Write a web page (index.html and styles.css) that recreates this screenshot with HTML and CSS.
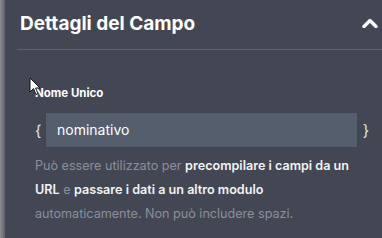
FILE: index.html
```html
<!DOCTYPE html>
<html lang="it">
<head>
  <meta charset="UTF-8" />
  <title>Dettagli del Campo</title>
  <link rel="stylesheet" href="styles.css">
</head>
<body>

  <div class="edge"></div>

  <div class="panel">
    <div class="panel-head">
      <div class="panel-title">Dettagli del Campo</div>
      <svg class="chevron" width="16" height="10" viewBox="0 0 16 10">
        <polyline points="2,8.5 8,2.5 14,8.5" fill="none" stroke="#ffffff" stroke-width="3.4" stroke-linecap="round" stroke-linejoin="round"/>
      </svg>
    </div>

    <div class="field">
      <div class="field-label">Nome Unico</div>
      <div class="field-row">
        <span class="brace">{</span>
        <div class="field-input">nominativo</div>
        <span class="brace">}</span>
      </div>
      <p class="field-help">
        Può essere utilizzato per <span class="hl">precompilare i campi da un</span><br>
        <span class="hl">URL</span> e <span class="hl">passare i dati a un altro modulo</span><br>
        automaticamente. Non può includere spazi.
      </p>
    </div>
  </div>

  <svg class="cursor" width="12" height="19" viewBox="0 0 12 19">
    <path d="M1 1 L1 15 L4.5 11.5 L7 17.5 L9 16.6 L6.6 11 L11 11 Z" fill="#ffffff" stroke="#111111" stroke-width="1" stroke-linejoin="round"/>
  </svg>

</body>
</html>
```

FILE: styles.css
```css
body {
  margin: 0;
  padding: 0;
  width: 382px;
  height: 238px;
  overflow: hidden;
  display: flex;
  background-color: #424753;
  font-family: Inter, "Noto Sans", sans-serif;
  position: relative;
}

.edge {
  width: 5px;
  flex-shrink: 0;
  background: linear-gradient(to right, #8c8d90, #5d6068);
}

.panel {
  flex: 1;
}

.panel-head {
  margin-left: 12px;
  height: 49px;
  border-bottom: 1px solid #5a6570;
  display: flex;
  align-items: center;
  justify-content: space-between;
  padding: 0 4px 0 3px;
}

.panel-title {
  font-size: 19px;
  font-weight: 700;
  color: #ffffff;
  margin-top: -3px;
}

.chevron {
  margin-top: -4px;
}

.field {
  padding: 35px 0 0 30px;
}

.field-label {
  font-size: 11.5px;
  font-weight: 700;
  color: #ffffff;
  line-height: 16px;
}

.field-row {
  display: flex;
  align-items: center;
  margin-top: 11px;
}

.brace {
  color: #e8e9ec;
  font-size: 15px;
  width: 10px;
  text-align: center;
}

.brace:first-child {
  width: 10px;
  text-align: left;
}

.field-input {
  width: 300px;
  height: 34px;
  line-height: 34px;
  background-color: #555e6c;
  border: 1px solid #3f4551;
  padding-left: 11px;
  font-size: 14px;
  color: #ffffff;
  margin-right: 3px;
}

.field-help {
  margin: 6px 0 0 0;
  font-size: 12.6px;
  line-height: 24px;
  color: #8a909b;
  width: 340px;
}

.hl {
  color: #f4f4f4;
  font-weight: 600;
}

.cursor {
  position: absolute;
  left: 29px;
  top: 77px;
}
```
